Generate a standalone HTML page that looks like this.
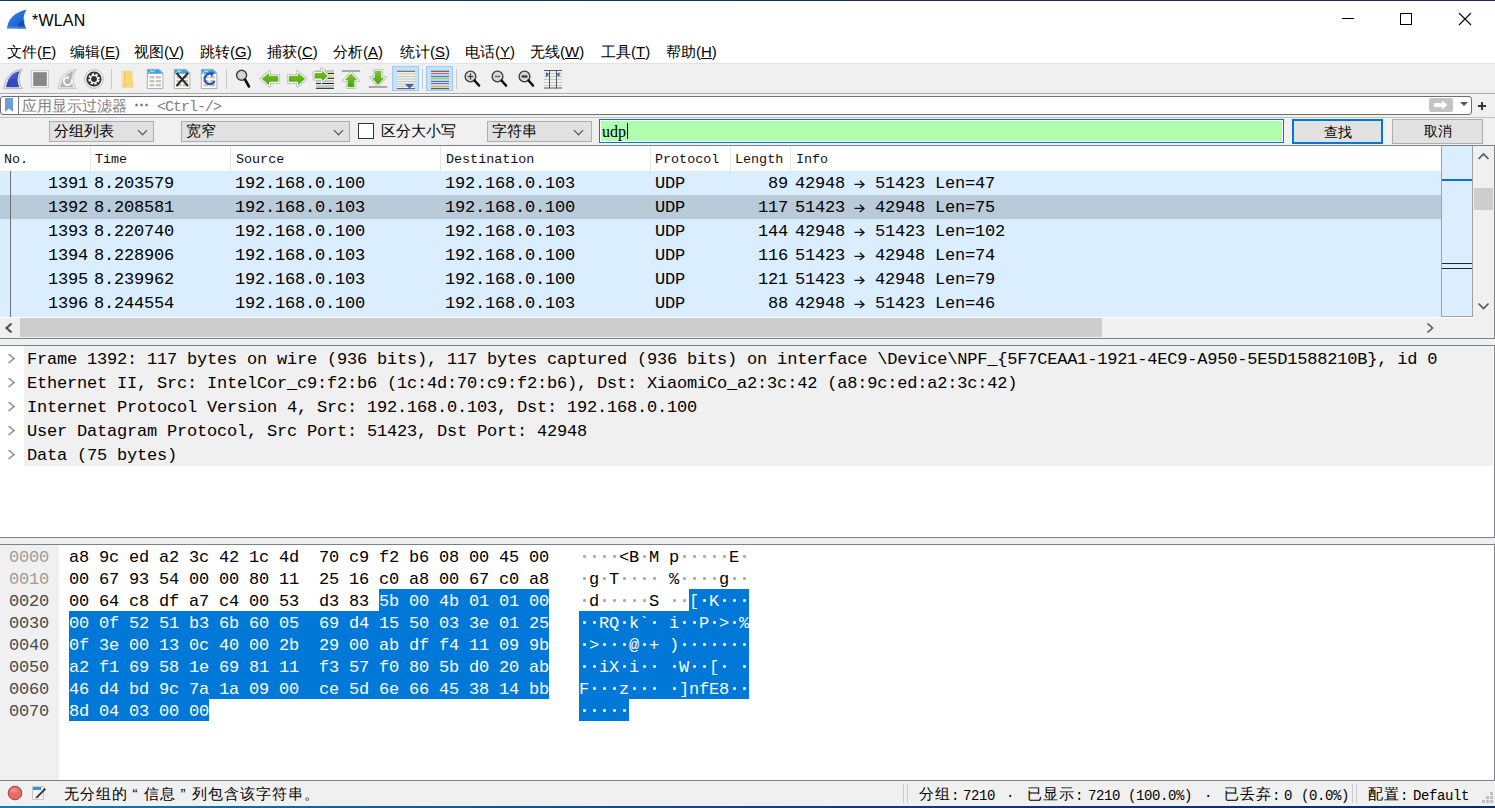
<!DOCTYPE html><html><head><meta charset="utf-8"><style>
*{margin:0;padding:0;box-sizing:border-box}
html,body{width:1495px;height:808px;overflow:hidden;background:#fff;font-family:"Liberation Sans",sans-serif;color:#000;position:relative}
.a{position:absolute}
.mi{position:absolute;top:5px;font-size:15px;white-space:nowrap;letter-spacing:0}
.m{font-family:"Liberation Mono",monospace;white-space:pre}
.pr{font-size:17px;letter-spacing:-0.2px;line-height:24px;height:24px}
.hx{font-size:17px;letter-spacing:-0.2px;line-height:22px;height:22px}
.combo{position:absolute;top:121px;height:21px;background:#e1e1e1;border:1px solid #adadad;font-size:15px;line-height:17px;padding-left:4px;white-space:nowrap}
.chev{position:absolute;width:7px;height:7px;border-right:1.2px solid #444;border-bottom:1.2px solid #444;transform:rotate(45deg)}
.btn{position:absolute;top:119px;height:25px;background:#e1e1e1;font-size:14px;line-height:22px;text-align:center}
</style></head><body>
<div class="a" style="left:0;top:0;width:1495px;height:1px;background:linear-gradient(90deg,#0c3a5a,#1a2a58)"></div>
<svg class="a" style="left:0;top:0" width="40" height="38">
<defs><linearGradient id="fin" x1="0" y1="0" x2="1" y2="1"><stop offset="0" stop-color="#3a8af0"/><stop offset="1" stop-color="#0e52c0"/></linearGradient></defs>
<path d="M7 28.5 C8 21 12 13 26.5 9.5 C23 15 22.5 22 26 28.5 Z" fill="url(#fin)"/>
<path d="M17 28.5 C18 24 21 21 24.5 19 C24 22 24.5 26 26 28.5 Z" fill="#0a3a98" opacity="0.6"/><rect x="7.5" y="26.5" width="18.5" height="2" fill="#6aa0e0" opacity="0.6"/>
</svg>
<div class="a" style="left:32px;top:12px;font-size:16px;letter-spacing:0.2px">*WLAN</div>
<div class="a" style="left:1342px;top:18px;width:12px;height:1px;background:#000"></div>
<div class="a" style="left:1400px;top:13px;width:12px;height:12px;border:1px solid #000"></div>
<svg class="a" style="left:1458px;top:12px" width="14" height="14"><path d="M1 1 L13 13 M13 1 L1 13" stroke="#000" stroke-width="1.1"/></svg>
<span class="a mi" style="left:7px;top:43px">文件(<u>F</u>)</span>
<span class="a mi" style="left:70px;top:43px">编辑(<u>E</u>)</span>
<span class="a mi" style="left:134px;top:43px">视图(<u>V</u>)</span>
<span class="a mi" style="left:200px;top:43px">跳转(<u>G</u>)</span>
<span class="a mi" style="left:267px;top:43px">捕获(<u>C</u>)</span>
<span class="a mi" style="left:333px;top:43px">分析(<u>A</u>)</span>
<span class="a mi" style="left:400px;top:43px">统计(<u>S</u>)</span>
<span class="a mi" style="left:465px;top:43px">电话(<u>Y</u>)</span>
<span class="a mi" style="left:530px;top:43px">无线(<u>W</u>)</span>
<span class="a mi" style="left:601px;top:43px">工具(<u>T</u>)</span>
<span class="a mi" style="left:666px;top:43px">帮助(<u>H</u>)</span>
<div class="a" style="left:0;top:63px;width:1495px;height:31px;background:#f0f0f0;border-top:1px solid #e3e3e3;border-bottom:1px solid #a8a8a8"></div>
<svg class="a" style="left:0;top:0" width="600" height="95" viewBox="0 0 600 95">
<defs>
<linearGradient id="gr" x1="0" y1="0" x2="0" y2="1"><stop offset="0" stop-color="#7cc832"/><stop offset="1" stop-color="#4aa00a"/></linearGradient>
</defs>
<!-- shark fin blue -->
<path d="M3.8 88.6 C4.5 79 10.5 70.5 22.2 69.2 C18.5 75 18 82 22.2 88.6 Z" fill="#e8e8e8" stroke="#a8a8a8" stroke-width="0.8"/>
<path d="M6 87.2 C7 80 12 73 20 71 C17 76 16.8 82 19.5 87.2 Z" fill="#3048c8"/>
<path d="M8 80 C10 75 14 72 19 71.5 C17 74 16.5 76 16.5 78 Z" fill="#4a62d8" opacity="0.6"/>
<!-- grey stop square -->
<rect x="31.3" y="70.3" width="17.2" height="17.4" fill="#f6f6f6" stroke="#c4c4c4" stroke-width="0.8"/>
<rect x="33.2" y="72.2" width="13.6" height="13.8" fill="#888"/>
<!-- grey fin reload -->
<path d="M58 88.6 C58.7 79 64.7 70.5 76.2 69.2 C72.5 75 72 82 76.2 88.6 Z" fill="#ececec" stroke="#c0c0c0" stroke-width="0.8"/>
<path d="M60.2 87.2 C61.2 80 66.2 73 74 71 C71 76 70.8 82 73.5 87.2 Z" fill="#b4b4b4"/>
<path d="M66 77.5 A4 4 0 1 0 71.5 79.5" fill="none" stroke="#fff" stroke-width="1.8"/>
<path d="M67.5 75 l-1.5 4 l3.2 -0.8z" fill="#fff"/>
<!-- gear -->
<circle cx="94" cy="79" r="9.4" fill="#efefef" stroke="#b0b0b0" stroke-width="0.8"/>
<circle cx="94" cy="79" r="7.6" fill="#333"/>
<circle cx="94" cy="79" r="4.9" fill="none" stroke="#fff" stroke-width="1.7" stroke-dasharray="2.2 1.65" transform="rotate(12 94 79)"/>
<circle cx="94" cy="79" r="3.6" fill="none" stroke="#fff" stroke-width="1.4"/>
<circle cx="94" cy="79" r="2.3" fill="#333"/>
<line x1="111.5" y1="69" x2="111.5" y2="89" stroke="#c8c8c8"/>
<!-- folder -->
<path d="M121 70.8 h11.5 v11 l1 1 v5 h-10 l-1.5 0.8 Z" fill="#f6d67a"/>
<path d="M121 70.8 l2.5 1.2 v15.5 l-1.2 1.2 l-1.3 -1.5 Z" fill="#fbe6a8"/>
<path d="M123.5 72 h2 v15.5 h-2 Z" fill="#eec45a" opacity="0.6"/>
<!-- doc -->
<g id="doc">
<path d="M147.3 69.4 h12 l3.6 3.6 v15.6 h-15.6 Z" fill="#fefef6" stroke="#9a9a9a" stroke-width="0.8"/>
<path d="M147.7 69.8 h11.4 l3.4 3.4 v0.5 h-14.8 Z" fill="#3aa0e8"/>
<path d="M149 73 l2.5 -2.5 l1 1.5 l2 -1.5" fill="none" stroke="#fff" stroke-width="0.9"/>
<g fill="#c4c4c4"><rect x="149.5" y="76" width="5" height="2.4"/><rect x="156" y="76" width="5" height="2.4"/><rect x="149.5" y="80" width="5" height="2.4"/><rect x="156" y="80" width="5" height="2.4"/><rect x="149.5" y="84" width="5" height="2.4"/><rect x="156" y="84" width="5" height="2.4"/></g>
</g>
<use href="#doc" x="27"/>
<path d="M176.5 73 L188 86 M188 73 L176.5 86" stroke="#2a2a2a" stroke-width="2"/>
<use href="#doc" x="54"/>
<path d="M212.5 74.5 A5.2 5.2 0 1 0 214.5 81" fill="none" stroke="#2a58b0" stroke-width="2.2"/>
<path d="M209.5 72 l5 0.5 l-2.8 4.5z" fill="#2a58b0"/>
<line x1="226.5" y1="69" x2="226.5" y2="89" stroke="#c8c8c8"/>
<!-- magnifier -->
<circle cx="241.6" cy="75.2" r="5" fill="#d6d6d6" stroke="#3a3a3a" stroke-width="1.4"/>
<line x1="245" y1="79.5" x2="249" y2="86.5" stroke="#111" stroke-width="2.6" stroke-linecap="round"/>
<!-- left arrow -->
<path d="M261 78.8 l8.6 -7.4 v3.8 h9.2 v7.2 h-9.2 v3.8 Z" fill="none" stroke="#b4b4b4" stroke-width="2.6" stroke-linejoin="round"/><path d="M261 78.8 l8.6 -7.4 v3.8 h9.2 v7.2 h-9.2 v3.8 Z" fill="url(#gr)" stroke="#fbfbfb" stroke-width="1.1" stroke-linejoin="round"/>
<!-- right arrow -->
<path d="M306 78.8 l-8.6 -7.4 v3.8 h-9.2 v7.2 h9.2 v3.8 Z" fill="none" stroke="#b4b4b4" stroke-width="2.6" stroke-linejoin="round"/><path d="M306 78.8 l-8.6 -7.4 v3.8 h-9.2 v7.2 h9.2 v3.8 Z" fill="url(#gr)" stroke="#fbfbfb" stroke-width="1.1" stroke-linejoin="round"/>
<!-- goto packet -->
<g stroke-width="1.1">
<line x1="316" y1="71" x2="334" y2="71" stroke="#a0a8a8"/><line x1="316" y1="73.4" x2="334" y2="73.4" stroke="#222"/>
<line x1="329" y1="75.8" x2="334" y2="75.8" stroke="#f8e040" stroke-width="1.8"/><line x1="316" y1="78.3" x2="334" y2="78.3" stroke="#222"/>
<line x1="316" y1="81" x2="334" y2="81" stroke="#a0a8a8"/><line x1="316" y1="83.5" x2="334" y2="83.5" stroke="#222"/>
<line x1="316" y1="86" x2="334" y2="86" stroke="#a0a8a8"/><line x1="316" y1="88.3" x2="334" y2="88.3" stroke="#222"/>
</g>
<path d="M314 72.5 h7.5 v-3.5 l7 6.8 l-7 6.8 v-3.5 h-7.5 Z" fill="none" stroke="#b4b4b4" stroke-width="2.6" stroke-linejoin="round"/><path d="M314 72.5 h7.5 v-3.5 l7 6.8 l-7 6.8 v-3.5 h-7.5 Z" fill="url(#gr)" stroke="#fbfbfb" stroke-width="1.1" stroke-linejoin="round"/>
<!-- first -->
<line x1="342.5" y1="71" x2="359.5" y2="71" stroke="#a8a8a8" stroke-width="1.8" stroke-linecap="round"/>
<path d="M351 72.5 l-7.5 8.3 h3.6 v7 h7.8 v-7 h3.6 Z" fill="none" stroke="#b4b4b4" stroke-width="2.6" stroke-linejoin="round"/><path d="M351 72.5 l-7.5 8.3 h3.6 v7 h7.8 v-7 h3.6 Z" fill="url(#gr)" stroke="#fbfbfb" stroke-width="1.1" stroke-linejoin="round"/>
<!-- last -->
<line x1="369.5" y1="87" x2="386.5" y2="87" stroke="#a8a8a8" stroke-width="1.8" stroke-linecap="round"/>
<path d="M378 85.5 l-7.5 -8.3 h3.6 v-7 h7.8 v7 h3.6 Z" fill="none" stroke="#b4b4b4" stroke-width="2.6" stroke-linejoin="round"/><path d="M378 85.5 l-7.5 -8.3 h3.6 v-7 h7.8 v7 h3.6 Z" fill="url(#gr)" stroke="#fbfbfb" stroke-width="1.1" stroke-linejoin="round"/>
<!-- autoscroll (pressed) -->
<rect x="392.5" y="66.5" width="26" height="24" fill="#c8e0f4" stroke="#99ccf6"/>
<rect x="397" y="71" width="18" height="18" fill="#f2f2ee"/>
<g stroke-width="1"><line x1="397" y1="71.3" x2="415" y2="71.3" stroke="#555"/><line x1="397" y1="88.6" x2="415" y2="88.6" stroke="#555"/>
<line x1="397" y1="73.8" x2="415" y2="73.8" stroke="#c4c4bc"/><line x1="397" y1="76.5" x2="415" y2="76.5" stroke="#c4c4bc"/><line x1="397" y1="79" x2="415" y2="79" stroke="#c4c4bc"/><line x1="397" y1="81.6" x2="415" y2="81.6" stroke="#c4c4bc"/><line x1="397" y1="84" x2="415" y2="84" stroke="#c4c4bc"/><line x1="397" y1="86.4" x2="415" y2="86.4" stroke="#c4c4bc"/></g>

<path d="M405 84 h9 l-4.5 4.5 Z" fill="#2d62b8"/>
<line x1="422.5" y1="69" x2="422.5" y2="89" stroke="#c8c8c8"/>
<!-- colorize (pressed) -->
<rect x="426.5" y="66.5" width="26" height="24" fill="#c8e0f4" stroke="#99ccf6"/>
<g stroke-width="1.1"><line x1="431" y1="71.3" x2="449" y2="71.3" stroke="#555"/><line x1="431" y1="73.6" x2="449" y2="73.6" stroke="#e85050"/><line x1="431" y1="76.5" x2="449" y2="76.5" stroke="#4a78c0"/><line x1="431" y1="78.6" x2="449" y2="78.6" stroke="#80d040"/><line x1="431" y1="81.4" x2="449" y2="81.4" stroke="#4a70b8"/><line x1="431" y1="83.5" x2="449" y2="83.5" stroke="#8a6a98"/><line x1="431" y1="86.4" x2="449" y2="86.4" stroke="#e0b040"/><line x1="431" y1="88.6" x2="449" y2="88.6" stroke="#555"/></g>
<line x1="456.5" y1="69" x2="456.5" y2="89" stroke="#c8c8c8"/>
<!-- zoom in/out/normal -->
<g id="zm"><circle cx="470.5" cy="76.5" r="5.4" fill="#d8d8d8" stroke="#3a3a3a" stroke-width="1.3"/><line x1="474.5" y1="80.5" x2="479" y2="85.5" stroke="#111" stroke-width="2.6" stroke-linecap="round"/></g>
<path d="M467.6 76.5 h5.8 M470.5 73.6 v5.8" stroke="#333" stroke-width="1.2"/>
<use href="#zm" x="27"/>
<path d="M494.8 76.5 h5.4" stroke="#666" stroke-width="1.4"/>
<use href="#zm" x="54"/>
<path d="M521.6 76.5 h5.8" stroke="#333" stroke-width="2.2"/>
<!-- resize columns -->
<g stroke="#c8c8c8" stroke-width="1"><line x1="544" y1="73.5" x2="562" y2="73.5"/><line x1="544" y1="76.5" x2="562" y2="76.5"/><line x1="544" y1="79.5" x2="562" y2="79.5"/><line x1="544" y1="82.5" x2="562" y2="82.5"/><line x1="544" y1="85.5" x2="562" y2="85.5"/></g>
<g stroke="#555" stroke-width="1"><line x1="544" y1="70.5" x2="562" y2="70.5"/><line x1="544" y1="88" x2="562" y2="88"/><line x1="549.5" y1="70" x2="549.5" y2="88.5"/><line x1="556.5" y1="70" x2="556.5" y2="88.5"/></g>
<path d="M546 72 l3 2.5 l-3 2.5z M559.5 72 l-3 2.5 l3 2.5z" fill="#2d5fb8"/>
</svg>

<div class="a" style="left:0;top:94px;width:1495px;height:24px;background:#f0f0f0"></div>
<div class="a" style="left:0;top:94px;width:1495px;height:1px;background:#fafafa"></div>
<div class="a" style="left:0;top:117px;width:1495px;height:1px;background:#c0c0c0"></div>
<div class="a" style="left:0;top:96px;width:1472px;height:19px;background:#fff;border:1px solid #6e6e6e;border-radius:3px"></div>
<div class="a" style="left:18px;top:97px;width:1px;height:17px;background:#7a7a7a"></div>
<svg class="a" style="left:5px;top:98px" width="9" height="15"><path d="M0 0 H8 V14 L4 10.5 L0 14 Z" fill="#6a9fd8"/></svg>
<div class="a" style="left:22px;top:97px;font-size:15px;line-height:17px;white-space:nowrap;color:#808080;"><span style="display:inline-block;width:15px;text-align:center;">应</span><span style="display:inline-block;width:15px;text-align:center;">用</span><span style="display:inline-block;width:15px;text-align:center;">显</span><span style="display:inline-block;width:15px;text-align:center;">示</span><span style="display:inline-block;width:15px;text-align:center;">过</span><span style="display:inline-block;width:15px;text-align:center;">滤</span><span style="display:inline-block;width:15px;text-align:center;">器</span></div>
<div class="a" style="left:134px;top:95px;font-size:15px;line-height:17px;white-space:nowrap;color:#707070;font-weight:bold"><span style="display:inline-block;width:15px;text-align:center;">⋯</span></div>
<div class="a" style="left:157px;top:97px;font-size:15px;line-height:17px;white-space:nowrap;color:#808080;"><span style="display:inline-block;width:8px;text-align:center;font-family:'Liberation Mono',monospace;font-size:15px;position:relative;top:0px">&lt;</span><span style="display:inline-block;width:8px;text-align:center;font-family:'Liberation Mono',monospace;font-size:15px;position:relative;top:0px">C</span><span style="display:inline-block;width:8px;text-align:center;font-family:'Liberation Mono',monospace;font-size:15px;position:relative;top:0px">t</span><span style="display:inline-block;width:8px;text-align:center;font-family:'Liberation Mono',monospace;font-size:15px;position:relative;top:0px">r</span><span style="display:inline-block;width:8px;text-align:center;font-family:'Liberation Mono',monospace;font-size:15px;position:relative;top:0px">l</span><span style="display:inline-block;width:8px;text-align:center;font-family:'Liberation Mono',monospace;font-size:15px;position:relative;top:0px">-</span><span style="display:inline-block;width:8px;text-align:center;font-family:'Liberation Mono',monospace;font-size:15px;position:relative;top:0px">/</span><span style="display:inline-block;width:8px;text-align:center;font-family:'Liberation Mono',monospace;font-size:15px;position:relative;top:0px">&gt;</span></div>
<div class="a" style="left:1429px;top:98px;width:24px;height:14px;background:#c4c4c4;border-radius:2px"></div>
<svg class="a" style="left:1433px;top:100px" width="16" height="10"><path d="M1 3 H9 V0.5 L14.5 5 L9 9.5 V7 H1 Z" fill="#fff"/></svg>
<svg class="a" style="left:1460px;top:102px" width="9" height="5"><path d="M0 0 H8 L4 4 Z" fill="#555"/></svg>
<svg class="a" style="left:1477px;top:101px" width="10" height="10"><path d="M5 1 V9 M1 5 H9" stroke="#333" stroke-width="2"/></svg>
<div class="a" style="left:0;top:118px;width:1495px;height:27px;background:#f0f0f0"></div>
<div class="combo" style="left:49px;width:105px">分组列表</div><div class="chev" style="left:139px;top:127px"></div>
<div class="combo" style="left:181px;width:169px">宽窄</div><div class="chev" style="left:335px;top:127px"></div>
<div class="a" style="left:358px;top:123px;width:16px;height:16px;border:1px solid #333;background:#fff"></div>
<div class="a" style="left:381px;top:122px;font-size:15px;line-height:17px;white-space:nowrap">区分大小写</div>
<div class="combo" style="left:487px;width:105px">字符串</div><div class="chev" style="left:575px;top:127px"></div>
<div class="a" style="left:599px;top:119px;width:685px;height:24px;background:#afffaf;border:1px solid #0078d7;box-shadow:inset 0 0 0 1px #fff"></div>
<div class="a" style="left:602px;top:122px;font-family:'Liberation Serif',serif;font-size:16px;line-height:20px">udp</div>
<div class="a" style="left:627px;top:123px;width:1px;height:16px;background:#000"></div>
<div class="btn" style="left:1292px;width:91px;border:2px solid #0078d7">查找</div>
<div class="btn" style="left:1392px;width:91px;border:1px solid #adadad;line-height:23px">取消</div>
<div class="a" style="left:0;top:145px;width:1495px;height:194px;background:#fff;border-top:1px solid #7a828a;border-bottom:1px solid #7a828a;border-right:1px solid #7a828a"></div>
<div class="a" style="left:90px;top:146px;width:1px;height:25px;background:#e5e5e5"></div>
<div class="a" style="left:230px;top:146px;width:1px;height:25px;background:#e5e5e5"></div>
<div class="a" style="left:440px;top:146px;width:1px;height:25px;background:#e5e5e5"></div>
<div class="a" style="left:650px;top:146px;width:1px;height:25px;background:#e5e5e5"></div>
<div class="a" style="left:730px;top:146px;width:1px;height:25px;background:#e5e5e5"></div>
<div class="a" style="left:790px;top:146px;width:1px;height:25px;background:#e5e5e5"></div>
<div class="a m" style="left:4px;top:148px;font-size:13.4px;line-height:24px;color:#111">No.</div>
<div class="a m" style="left:95px;top:148px;font-size:13.4px;line-height:24px;color:#111">Time</div>
<div class="a m" style="left:236px;top:148px;font-size:13.4px;line-height:24px;color:#111">Source</div>
<div class="a m" style="left:446px;top:148px;font-size:13.4px;line-height:24px;color:#111">Destination</div>
<div class="a m" style="left:655px;top:148px;font-size:13.4px;line-height:24px;color:#111">Protocol</div>
<div class="a m" style="left:735px;top:148px;font-size:13.4px;line-height:24px;color:#111">Length</div>
<div class="a m" style="left:796px;top:148px;font-size:13.4px;line-height:24px;color:#111">Info</div>
<div class="a" style="left:0;top:171px;width:1441px;height:146px;background:#daeeff"></div>
<div class="a" style="left:0;top:195px;width:1441px;height:24px;background:#b9cad9"></div>
<div class="a" style="left:10px;top:171px;width:1px;height:146px;background:#6a7078"></div>
<div class="a m pr" style="left:48px;top:172px">1391</div>
<div class="a m pr" style="left:94px;top:172px">8.203579</div>
<div class="a m pr" style="left:235px;top:172px">192.168.0.100</div>
<div class="a m pr" style="left:445px;top:172px">192.168.0.103</div>
<div class="a m pr" style="left:655px;top:172px">UDP</div>
<div class="a m pr" style="left:768px;top:172px">89</div>
<div class="a m pr" style="left:795px;top:172px">42948</div>
<div class="a m pr" style="left:875px;top:172px">51423 Len=47</div>
<svg class="a" style="left:853px;top:179px" width="13" height="10"><path d="M1.5 5.4 H11 M6.8 1.8 L11 5.4 L6.8 9" fill="none" stroke="#111" stroke-width="1.3"/></svg>
<div class="a m pr" style="left:48px;top:196px">1392</div>
<div class="a m pr" style="left:94px;top:196px">8.208581</div>
<div class="a m pr" style="left:235px;top:196px">192.168.0.103</div>
<div class="a m pr" style="left:445px;top:196px">192.168.0.100</div>
<div class="a m pr" style="left:655px;top:196px">UDP</div>
<div class="a m pr" style="left:758px;top:196px">117</div>
<div class="a m pr" style="left:795px;top:196px">51423</div>
<div class="a m pr" style="left:875px;top:196px">42948 Len=75</div>
<svg class="a" style="left:853px;top:203px" width="13" height="10"><path d="M1.5 5.4 H11 M6.8 1.8 L11 5.4 L6.8 9" fill="none" stroke="#111" stroke-width="1.3"/></svg>
<div class="a m pr" style="left:48px;top:220px">1393</div>
<div class="a m pr" style="left:94px;top:220px">8.220740</div>
<div class="a m pr" style="left:235px;top:220px">192.168.0.100</div>
<div class="a m pr" style="left:445px;top:220px">192.168.0.103</div>
<div class="a m pr" style="left:655px;top:220px">UDP</div>
<div class="a m pr" style="left:758px;top:220px">144</div>
<div class="a m pr" style="left:795px;top:220px">42948</div>
<div class="a m pr" style="left:875px;top:220px">51423 Len=102</div>
<svg class="a" style="left:853px;top:227px" width="13" height="10"><path d="M1.5 5.4 H11 M6.8 1.8 L11 5.4 L6.8 9" fill="none" stroke="#111" stroke-width="1.3"/></svg>
<div class="a m pr" style="left:48px;top:244px">1394</div>
<div class="a m pr" style="left:94px;top:244px">8.228906</div>
<div class="a m pr" style="left:235px;top:244px">192.168.0.103</div>
<div class="a m pr" style="left:445px;top:244px">192.168.0.100</div>
<div class="a m pr" style="left:655px;top:244px">UDP</div>
<div class="a m pr" style="left:758px;top:244px">116</div>
<div class="a m pr" style="left:795px;top:244px">51423</div>
<div class="a m pr" style="left:875px;top:244px">42948 Len=74</div>
<svg class="a" style="left:853px;top:251px" width="13" height="10"><path d="M1.5 5.4 H11 M6.8 1.8 L11 5.4 L6.8 9" fill="none" stroke="#111" stroke-width="1.3"/></svg>
<div class="a m pr" style="left:48px;top:268px">1395</div>
<div class="a m pr" style="left:94px;top:268px">8.239962</div>
<div class="a m pr" style="left:235px;top:268px">192.168.0.103</div>
<div class="a m pr" style="left:445px;top:268px">192.168.0.100</div>
<div class="a m pr" style="left:655px;top:268px">UDP</div>
<div class="a m pr" style="left:758px;top:268px">121</div>
<div class="a m pr" style="left:795px;top:268px">51423</div>
<div class="a m pr" style="left:875px;top:268px">42948 Len=79</div>
<svg class="a" style="left:853px;top:275px" width="13" height="10"><path d="M1.5 5.4 H11 M6.8 1.8 L11 5.4 L6.8 9" fill="none" stroke="#111" stroke-width="1.3"/></svg>
<div class="a m pr" style="left:48px;top:292px">1396</div>
<div class="a m pr" style="left:94px;top:292px">8.244554</div>
<div class="a m pr" style="left:235px;top:292px">192.168.0.100</div>
<div class="a m pr" style="left:445px;top:292px">192.168.0.103</div>
<div class="a m pr" style="left:655px;top:292px">UDP</div>
<div class="a m pr" style="left:768px;top:292px">88</div>
<div class="a m pr" style="left:795px;top:292px">42948</div>
<div class="a m pr" style="left:875px;top:292px">51423 Len=46</div>
<svg class="a" style="left:853px;top:299px" width="13" height="10"><path d="M1.5 5.4 H11 M6.8 1.8 L11 5.4 L6.8 9" fill="none" stroke="#111" stroke-width="1.3"/></svg>
<div class="a" style="left:1441px;top:146px;width:32px;height:171px;background:#daeeff;border:1px solid #a0a0a0;border-top:none"></div>
<div class="a" style="left:1442px;top:179px;width:30px;height:2px;background:#0a6ed8"></div>
<div class="a" style="left:1442px;top:263px;width:30px;height:1px;background:#1a2a30"></div>
<div class="a" style="left:1442px;top:268px;width:30px;height:1px;background:#1a2a30"></div>
<div class="a" style="left:1473px;top:146px;width:21px;height:192px;background:#f0f0f0"></div>
<div class="a" style="left:1474px;top:188px;width:19px;height:22px;background:#cdcdcd"></div>
<svg class="a" style="left:1477px;top:152px" width="13" height="9"><path d="M1.5 7 L6.5 2 L11.5 7" fill="none" stroke="#555" stroke-width="1.6"/></svg>
<svg class="a" style="left:1477px;top:302px" width="13" height="9"><path d="M1.5 1.5 L6.5 6.5 L11.5 1.5" fill="none" stroke="#555" stroke-width="1.6"/></svg>
<div class="a" style="left:0;top:317px;width:1441px;height:1px;background:#fff"></div>
<div class="a" style="left:0;top:318px;width:1473px;height:20px;background:#f0f0f0"></div>
<div class="a" style="left:20px;top:318px;width:1082px;height:19px;background:#cdcdcd"></div>
<svg class="a" style="left:4px;top:322px" width="9" height="12"><path d="M7.5 1.5 L2.5 6 L7.5 10.5" fill="none" stroke="#505050" stroke-width="2.2"/></svg>
<svg class="a" style="left:1426px;top:322px" width="9" height="12"><path d="M1.5 1.5 L6.5 6 L1.5 10.5" fill="none" stroke="#555" stroke-width="1.6"/></svg>
<div class="a" style="left:0;top:339px;width:1495px;height:6px;background:#f0f0f0"></div>
<div class="a" style="left:0;top:345px;width:1495px;height:193px;background:#fff;border-top:1px solid #7a828a;border-bottom:1px solid #7a828a;border-right:1px solid #7a828a"></div>
<div class="a" style="left:24px;top:346px;width:1469px;height:120px;background:#f0f0f0"></div>
<svg class="a" style="left:7px;top:353px" width="9" height="11"><path d="M1.5 1 L7 5.5 L1.5 10" fill="none" stroke="#8a8a8a" stroke-width="1.5"/></svg>
<div class="a m pr" style="left:27px;top:348px">Frame 1392: 117 bytes on wire (936 bits), 117 bytes captured (936 bits) on interface \Device\NPF_{5F7CEAA1-1921-4EC9-A950-5E5D1588210B}, id 0</div>
<svg class="a" style="left:7px;top:377px" width="9" height="11"><path d="M1.5 1 L7 5.5 L1.5 10" fill="none" stroke="#8a8a8a" stroke-width="1.5"/></svg>
<div class="a m pr" style="left:27px;top:372px">Ethernet II, Src: IntelCor_c9:f2:b6 (1c:4d:70:c9:f2:b6), Dst: XiaomiCo_a2:3c:42 (a8:9c:ed:a2:3c:42)</div>
<svg class="a" style="left:7px;top:401px" width="9" height="11"><path d="M1.5 1 L7 5.5 L1.5 10" fill="none" stroke="#8a8a8a" stroke-width="1.5"/></svg>
<div class="a m pr" style="left:27px;top:396px">Internet Protocol Version 4, Src: 192.168.0.103, Dst: 192.168.0.100</div>
<svg class="a" style="left:7px;top:425px" width="9" height="11"><path d="M1.5 1 L7 5.5 L1.5 10" fill="none" stroke="#8a8a8a" stroke-width="1.5"/></svg>
<div class="a m pr" style="left:27px;top:420px">User Datagram Protocol, Src Port: 51423, Dst Port: 42948</div>
<svg class="a" style="left:7px;top:449px" width="9" height="11"><path d="M1.5 1 L7 5.5 L1.5 10" fill="none" stroke="#8a8a8a" stroke-width="1.5"/></svg>
<div class="a m pr" style="left:27px;top:444px">Data (75 bytes)</div>
<div class="a" style="left:0;top:538px;width:1495px;height:6px;background:#f0f0f0"></div>
<div class="a" style="left:0;top:544px;width:1495px;height:237px;background:#fff;border-top:1px solid #7a828a;border-bottom:1px solid #7a828a;border-right:1px solid #7a828a"></div>
<div class="a" style="left:0;top:545px;width:59px;height:235px;background:#f0f0f0"></div>
<div class="a m hx" style="left:9px;top:547px;color:#a09a98">0000</div>
<div class="a m hx" style="left:69px;top:547px;color:#000">a8</div>
<div class="a" style="left:583px;top:555px;width:2.6px;height:2.6px;border-radius:50%;background:#a8a8a8"></div>
<div class="a m hx" style="left:99px;top:547px;color:#000">9c</div>
<div class="a" style="left:593px;top:555px;width:2.6px;height:2.6px;border-radius:50%;background:#a8a8a8"></div>
<div class="a m hx" style="left:129px;top:547px;color:#000">ed</div>
<div class="a" style="left:603px;top:555px;width:2.6px;height:2.6px;border-radius:50%;background:#a8a8a8"></div>
<div class="a m hx" style="left:159px;top:547px;color:#000">a2</div>
<div class="a" style="left:613px;top:555px;width:2.6px;height:2.6px;border-radius:50%;background:#a8a8a8"></div>
<div class="a m hx" style="left:189px;top:547px;color:#000">3c</div>
<div class="a m hx" style="left:619px;top:547px;color:#000">&lt;</div>
<div class="a m hx" style="left:219px;top:547px;color:#000">42</div>
<div class="a m hx" style="left:629px;top:547px;color:#000">B</div>
<div class="a m hx" style="left:249px;top:547px;color:#000">1c</div>
<div class="a" style="left:643px;top:555px;width:2.6px;height:2.6px;border-radius:50%;background:#a8a8a8"></div>
<div class="a m hx" style="left:279px;top:547px;color:#000">4d</div>
<div class="a m hx" style="left:649px;top:547px;color:#000">M</div>
<div class="a m hx" style="left:319px;top:547px;color:#000">70</div>
<div class="a m hx" style="left:669px;top:547px;color:#000">p</div>
<div class="a m hx" style="left:349px;top:547px;color:#000">c9</div>
<div class="a" style="left:683px;top:555px;width:2.6px;height:2.6px;border-radius:50%;background:#a8a8a8"></div>
<div class="a m hx" style="left:379px;top:547px;color:#000">f2</div>
<div class="a" style="left:693px;top:555px;width:2.6px;height:2.6px;border-radius:50%;background:#a8a8a8"></div>
<div class="a m hx" style="left:409px;top:547px;color:#000">b6</div>
<div class="a" style="left:703px;top:555px;width:2.6px;height:2.6px;border-radius:50%;background:#a8a8a8"></div>
<div class="a m hx" style="left:439px;top:547px;color:#000">08</div>
<div class="a" style="left:713px;top:555px;width:2.6px;height:2.6px;border-radius:50%;background:#a8a8a8"></div>
<div class="a m hx" style="left:469px;top:547px;color:#000">00</div>
<div class="a" style="left:723px;top:555px;width:2.6px;height:2.6px;border-radius:50%;background:#a8a8a8"></div>
<div class="a m hx" style="left:499px;top:547px;color:#000">45</div>
<div class="a m hx" style="left:729px;top:547px;color:#000">E</div>
<div class="a m hx" style="left:529px;top:547px;color:#000">00</div>
<div class="a" style="left:743px;top:555px;width:2.6px;height:2.6px;border-radius:50%;background:#a8a8a8"></div>
<div class="a m hx" style="left:9px;top:569px;color:#a09a98">0010</div>
<div class="a m hx" style="left:69px;top:569px;color:#000">00</div>
<div class="a" style="left:583px;top:577px;width:2.6px;height:2.6px;border-radius:50%;background:#a8a8a8"></div>
<div class="a m hx" style="left:99px;top:569px;color:#000">67</div>
<div class="a m hx" style="left:589px;top:569px;color:#000">g</div>
<div class="a m hx" style="left:129px;top:569px;color:#000">93</div>
<div class="a" style="left:603px;top:577px;width:2.6px;height:2.6px;border-radius:50%;background:#a8a8a8"></div>
<div class="a m hx" style="left:159px;top:569px;color:#000">54</div>
<div class="a m hx" style="left:609px;top:569px;color:#000">T</div>
<div class="a m hx" style="left:189px;top:569px;color:#000">00</div>
<div class="a" style="left:623px;top:577px;width:2.6px;height:2.6px;border-radius:50%;background:#a8a8a8"></div>
<div class="a m hx" style="left:219px;top:569px;color:#000">00</div>
<div class="a" style="left:633px;top:577px;width:2.6px;height:2.6px;border-radius:50%;background:#a8a8a8"></div>
<div class="a m hx" style="left:249px;top:569px;color:#000">80</div>
<div class="a" style="left:643px;top:577px;width:2.6px;height:2.6px;border-radius:50%;background:#a8a8a8"></div>
<div class="a m hx" style="left:279px;top:569px;color:#000">11</div>
<div class="a" style="left:653px;top:577px;width:2.6px;height:2.6px;border-radius:50%;background:#a8a8a8"></div>
<div class="a m hx" style="left:319px;top:569px;color:#000">25</div>
<div class="a m hx" style="left:669px;top:569px;color:#000">%</div>
<div class="a m hx" style="left:349px;top:569px;color:#000">16</div>
<div class="a" style="left:683px;top:577px;width:2.6px;height:2.6px;border-radius:50%;background:#a8a8a8"></div>
<div class="a m hx" style="left:379px;top:569px;color:#000">c0</div>
<div class="a" style="left:693px;top:577px;width:2.6px;height:2.6px;border-radius:50%;background:#a8a8a8"></div>
<div class="a m hx" style="left:409px;top:569px;color:#000">a8</div>
<div class="a" style="left:703px;top:577px;width:2.6px;height:2.6px;border-radius:50%;background:#a8a8a8"></div>
<div class="a m hx" style="left:439px;top:569px;color:#000">00</div>
<div class="a" style="left:713px;top:577px;width:2.6px;height:2.6px;border-radius:50%;background:#a8a8a8"></div>
<div class="a m hx" style="left:469px;top:569px;color:#000">67</div>
<div class="a m hx" style="left:719px;top:569px;color:#000">g</div>
<div class="a m hx" style="left:499px;top:569px;color:#000">c0</div>
<div class="a" style="left:733px;top:577px;width:2.6px;height:2.6px;border-radius:50%;background:#a8a8a8"></div>
<div class="a m hx" style="left:529px;top:569px;color:#000">a8</div>
<div class="a" style="left:743px;top:577px;width:2.6px;height:2.6px;border-radius:50%;background:#a8a8a8"></div>
<div class="a m hx" style="left:9px;top:591px;color:#4a4a4a">0020</div>
<div class="a" style="left:379px;top:589px;width:170px;height:22px;background:#0078d7"></div>
<div class="a" style="left:689px;top:589px;width:60px;height:22px;background:#0078d7"></div>
<div class="a m hx" style="left:69px;top:591px;color:#000">00</div>
<div class="a" style="left:583px;top:599px;width:2.6px;height:2.6px;border-radius:50%;background:#a8a8a8"></div>
<div class="a m hx" style="left:99px;top:591px;color:#000">64</div>
<div class="a m hx" style="left:589px;top:591px;color:#000">d</div>
<div class="a m hx" style="left:129px;top:591px;color:#000">c8</div>
<div class="a" style="left:603px;top:599px;width:2.6px;height:2.6px;border-radius:50%;background:#a8a8a8"></div>
<div class="a m hx" style="left:159px;top:591px;color:#000">df</div>
<div class="a" style="left:613px;top:599px;width:2.6px;height:2.6px;border-radius:50%;background:#a8a8a8"></div>
<div class="a m hx" style="left:189px;top:591px;color:#000">a7</div>
<div class="a" style="left:623px;top:599px;width:2.6px;height:2.6px;border-radius:50%;background:#a8a8a8"></div>
<div class="a m hx" style="left:219px;top:591px;color:#000">c4</div>
<div class="a" style="left:633px;top:599px;width:2.6px;height:2.6px;border-radius:50%;background:#a8a8a8"></div>
<div class="a m hx" style="left:249px;top:591px;color:#000">00</div>
<div class="a" style="left:643px;top:599px;width:2.6px;height:2.6px;border-radius:50%;background:#a8a8a8"></div>
<div class="a m hx" style="left:279px;top:591px;color:#000">53</div>
<div class="a m hx" style="left:649px;top:591px;color:#000">S</div>
<div class="a m hx" style="left:319px;top:591px;color:#000">d3</div>
<div class="a" style="left:673px;top:599px;width:2.6px;height:2.6px;border-radius:50%;background:#a8a8a8"></div>
<div class="a m hx" style="left:349px;top:591px;color:#000">83</div>
<div class="a" style="left:683px;top:599px;width:2.6px;height:2.6px;border-radius:50%;background:#a8a8a8"></div>
<div class="a m hx" style="left:379px;top:591px;color:#fff">5b</div>
<div class="a m hx" style="left:689px;top:591px;color:#fff">[</div>
<div class="a m hx" style="left:409px;top:591px;color:#fff">00</div>
<div class="a" style="left:703px;top:599px;width:2.6px;height:2.6px;border-radius:50%;background:#e8f2fb"></div>
<div class="a m hx" style="left:439px;top:591px;color:#fff">4b</div>
<div class="a m hx" style="left:709px;top:591px;color:#fff">K</div>
<div class="a m hx" style="left:469px;top:591px;color:#fff">01</div>
<div class="a" style="left:723px;top:599px;width:2.6px;height:2.6px;border-radius:50%;background:#e8f2fb"></div>
<div class="a m hx" style="left:499px;top:591px;color:#fff">01</div>
<div class="a" style="left:733px;top:599px;width:2.6px;height:2.6px;border-radius:50%;background:#e8f2fb"></div>
<div class="a m hx" style="left:529px;top:591px;color:#fff">00</div>
<div class="a" style="left:743px;top:599px;width:2.6px;height:2.6px;border-radius:50%;background:#e8f2fb"></div>
<div class="a m hx" style="left:9px;top:613px;color:#4a4a4a">0030</div>
<div class="a" style="left:69px;top:611px;width:480px;height:22px;background:#0078d7"></div>
<div class="a" style="left:579px;top:611px;width:170px;height:22px;background:#0078d7"></div>
<div class="a m hx" style="left:69px;top:613px;color:#fff">00</div>
<div class="a" style="left:583px;top:621px;width:2.6px;height:2.6px;border-radius:50%;background:#e8f2fb"></div>
<div class="a m hx" style="left:99px;top:613px;color:#fff">0f</div>
<div class="a" style="left:593px;top:621px;width:2.6px;height:2.6px;border-radius:50%;background:#e8f2fb"></div>
<div class="a m hx" style="left:129px;top:613px;color:#fff">52</div>
<div class="a m hx" style="left:599px;top:613px;color:#fff">R</div>
<div class="a m hx" style="left:159px;top:613px;color:#fff">51</div>
<div class="a m hx" style="left:609px;top:613px;color:#fff">Q</div>
<div class="a m hx" style="left:189px;top:613px;color:#fff">b3</div>
<div class="a" style="left:623px;top:621px;width:2.6px;height:2.6px;border-radius:50%;background:#e8f2fb"></div>
<div class="a m hx" style="left:219px;top:613px;color:#fff">6b</div>
<div class="a m hx" style="left:629px;top:613px;color:#fff">k</div>
<div class="a m hx" style="left:249px;top:613px;color:#fff">60</div>
<div class="a m hx" style="left:639px;top:613px;color:#fff">`</div>
<div class="a m hx" style="left:279px;top:613px;color:#fff">05</div>
<div class="a" style="left:653px;top:621px;width:2.6px;height:2.6px;border-radius:50%;background:#e8f2fb"></div>
<div class="a m hx" style="left:319px;top:613px;color:#fff">69</div>
<div class="a m hx" style="left:669px;top:613px;color:#fff">i</div>
<div class="a m hx" style="left:349px;top:613px;color:#fff">d4</div>
<div class="a" style="left:683px;top:621px;width:2.6px;height:2.6px;border-radius:50%;background:#e8f2fb"></div>
<div class="a m hx" style="left:379px;top:613px;color:#fff">15</div>
<div class="a" style="left:693px;top:621px;width:2.6px;height:2.6px;border-radius:50%;background:#e8f2fb"></div>
<div class="a m hx" style="left:409px;top:613px;color:#fff">50</div>
<div class="a m hx" style="left:699px;top:613px;color:#fff">P</div>
<div class="a m hx" style="left:439px;top:613px;color:#fff">03</div>
<div class="a" style="left:713px;top:621px;width:2.6px;height:2.6px;border-radius:50%;background:#e8f2fb"></div>
<div class="a m hx" style="left:469px;top:613px;color:#fff">3e</div>
<div class="a m hx" style="left:719px;top:613px;color:#fff">&gt;</div>
<div class="a m hx" style="left:499px;top:613px;color:#fff">01</div>
<div class="a" style="left:733px;top:621px;width:2.6px;height:2.6px;border-radius:50%;background:#e8f2fb"></div>
<div class="a m hx" style="left:529px;top:613px;color:#fff">25</div>
<div class="a m hx" style="left:739px;top:613px;color:#fff">%</div>
<div class="a m hx" style="left:9px;top:635px;color:#4a4a4a">0040</div>
<div class="a" style="left:69px;top:633px;width:480px;height:22px;background:#0078d7"></div>
<div class="a" style="left:579px;top:633px;width:170px;height:22px;background:#0078d7"></div>
<div class="a m hx" style="left:69px;top:635px;color:#fff">0f</div>
<div class="a" style="left:583px;top:643px;width:2.6px;height:2.6px;border-radius:50%;background:#e8f2fb"></div>
<div class="a m hx" style="left:99px;top:635px;color:#fff">3e</div>
<div class="a m hx" style="left:589px;top:635px;color:#fff">&gt;</div>
<div class="a m hx" style="left:129px;top:635px;color:#fff">00</div>
<div class="a" style="left:603px;top:643px;width:2.6px;height:2.6px;border-radius:50%;background:#e8f2fb"></div>
<div class="a m hx" style="left:159px;top:635px;color:#fff">13</div>
<div class="a" style="left:613px;top:643px;width:2.6px;height:2.6px;border-radius:50%;background:#e8f2fb"></div>
<div class="a m hx" style="left:189px;top:635px;color:#fff">0c</div>
<div class="a" style="left:623px;top:643px;width:2.6px;height:2.6px;border-radius:50%;background:#e8f2fb"></div>
<div class="a m hx" style="left:219px;top:635px;color:#fff">40</div>
<div class="a m hx" style="left:629px;top:635px;color:#fff">@</div>
<div class="a m hx" style="left:249px;top:635px;color:#fff">00</div>
<div class="a" style="left:643px;top:643px;width:2.6px;height:2.6px;border-radius:50%;background:#e8f2fb"></div>
<div class="a m hx" style="left:279px;top:635px;color:#fff">2b</div>
<div class="a m hx" style="left:649px;top:635px;color:#fff">+</div>
<div class="a m hx" style="left:319px;top:635px;color:#fff">29</div>
<div class="a m hx" style="left:669px;top:635px;color:#fff">)</div>
<div class="a m hx" style="left:349px;top:635px;color:#fff">00</div>
<div class="a" style="left:683px;top:643px;width:2.6px;height:2.6px;border-radius:50%;background:#e8f2fb"></div>
<div class="a m hx" style="left:379px;top:635px;color:#fff">ab</div>
<div class="a" style="left:693px;top:643px;width:2.6px;height:2.6px;border-radius:50%;background:#e8f2fb"></div>
<div class="a m hx" style="left:409px;top:635px;color:#fff">df</div>
<div class="a" style="left:703px;top:643px;width:2.6px;height:2.6px;border-radius:50%;background:#e8f2fb"></div>
<div class="a m hx" style="left:439px;top:635px;color:#fff">f4</div>
<div class="a" style="left:713px;top:643px;width:2.6px;height:2.6px;border-radius:50%;background:#e8f2fb"></div>
<div class="a m hx" style="left:469px;top:635px;color:#fff">11</div>
<div class="a" style="left:723px;top:643px;width:2.6px;height:2.6px;border-radius:50%;background:#e8f2fb"></div>
<div class="a m hx" style="left:499px;top:635px;color:#fff">09</div>
<div class="a" style="left:733px;top:643px;width:2.6px;height:2.6px;border-radius:50%;background:#e8f2fb"></div>
<div class="a m hx" style="left:529px;top:635px;color:#fff">9b</div>
<div class="a" style="left:743px;top:643px;width:2.6px;height:2.6px;border-radius:50%;background:#e8f2fb"></div>
<div class="a m hx" style="left:9px;top:657px;color:#4a4a4a">0050</div>
<div class="a" style="left:69px;top:655px;width:480px;height:22px;background:#0078d7"></div>
<div class="a" style="left:579px;top:655px;width:170px;height:22px;background:#0078d7"></div>
<div class="a m hx" style="left:69px;top:657px;color:#fff">a2</div>
<div class="a" style="left:583px;top:665px;width:2.6px;height:2.6px;border-radius:50%;background:#e8f2fb"></div>
<div class="a m hx" style="left:99px;top:657px;color:#fff">f1</div>
<div class="a" style="left:593px;top:665px;width:2.6px;height:2.6px;border-radius:50%;background:#e8f2fb"></div>
<div class="a m hx" style="left:129px;top:657px;color:#fff">69</div>
<div class="a m hx" style="left:599px;top:657px;color:#fff">i</div>
<div class="a m hx" style="left:159px;top:657px;color:#fff">58</div>
<div class="a m hx" style="left:609px;top:657px;color:#fff">X</div>
<div class="a m hx" style="left:189px;top:657px;color:#fff">1e</div>
<div class="a" style="left:623px;top:665px;width:2.6px;height:2.6px;border-radius:50%;background:#e8f2fb"></div>
<div class="a m hx" style="left:219px;top:657px;color:#fff">69</div>
<div class="a m hx" style="left:629px;top:657px;color:#fff">i</div>
<div class="a m hx" style="left:249px;top:657px;color:#fff">81</div>
<div class="a" style="left:643px;top:665px;width:2.6px;height:2.6px;border-radius:50%;background:#e8f2fb"></div>
<div class="a m hx" style="left:279px;top:657px;color:#fff">11</div>
<div class="a" style="left:653px;top:665px;width:2.6px;height:2.6px;border-radius:50%;background:#e8f2fb"></div>
<div class="a m hx" style="left:319px;top:657px;color:#fff">f3</div>
<div class="a" style="left:673px;top:665px;width:2.6px;height:2.6px;border-radius:50%;background:#e8f2fb"></div>
<div class="a m hx" style="left:349px;top:657px;color:#fff">57</div>
<div class="a m hx" style="left:679px;top:657px;color:#fff">W</div>
<div class="a m hx" style="left:379px;top:657px;color:#fff">f0</div>
<div class="a" style="left:693px;top:665px;width:2.6px;height:2.6px;border-radius:50%;background:#e8f2fb"></div>
<div class="a m hx" style="left:409px;top:657px;color:#fff">80</div>
<div class="a" style="left:703px;top:665px;width:2.6px;height:2.6px;border-radius:50%;background:#e8f2fb"></div>
<div class="a m hx" style="left:439px;top:657px;color:#fff">5b</div>
<div class="a m hx" style="left:709px;top:657px;color:#fff">[</div>
<div class="a m hx" style="left:469px;top:657px;color:#fff">d0</div>
<div class="a" style="left:723px;top:665px;width:2.6px;height:2.6px;border-radius:50%;background:#e8f2fb"></div>
<div class="a m hx" style="left:499px;top:657px;color:#fff">20</div>
<div class="a m hx" style="left:729px;top:657px;color:#fff"> </div>
<div class="a m hx" style="left:529px;top:657px;color:#fff">ab</div>
<div class="a" style="left:743px;top:665px;width:2.6px;height:2.6px;border-radius:50%;background:#e8f2fb"></div>
<div class="a m hx" style="left:9px;top:679px;color:#4a4a4a">0060</div>
<div class="a" style="left:69px;top:677px;width:480px;height:22px;background:#0078d7"></div>
<div class="a" style="left:579px;top:677px;width:170px;height:22px;background:#0078d7"></div>
<div class="a m hx" style="left:69px;top:679px;color:#fff">46</div>
<div class="a m hx" style="left:579px;top:679px;color:#fff">F</div>
<div class="a m hx" style="left:99px;top:679px;color:#fff">d4</div>
<div class="a" style="left:593px;top:687px;width:2.6px;height:2.6px;border-radius:50%;background:#e8f2fb"></div>
<div class="a m hx" style="left:129px;top:679px;color:#fff">bd</div>
<div class="a" style="left:603px;top:687px;width:2.6px;height:2.6px;border-radius:50%;background:#e8f2fb"></div>
<div class="a m hx" style="left:159px;top:679px;color:#fff">9c</div>
<div class="a" style="left:613px;top:687px;width:2.6px;height:2.6px;border-radius:50%;background:#e8f2fb"></div>
<div class="a m hx" style="left:189px;top:679px;color:#fff">7a</div>
<div class="a m hx" style="left:619px;top:679px;color:#fff">z</div>
<div class="a m hx" style="left:219px;top:679px;color:#fff">1a</div>
<div class="a" style="left:633px;top:687px;width:2.6px;height:2.6px;border-radius:50%;background:#e8f2fb"></div>
<div class="a m hx" style="left:249px;top:679px;color:#fff">09</div>
<div class="a" style="left:643px;top:687px;width:2.6px;height:2.6px;border-radius:50%;background:#e8f2fb"></div>
<div class="a m hx" style="left:279px;top:679px;color:#fff">00</div>
<div class="a" style="left:653px;top:687px;width:2.6px;height:2.6px;border-radius:50%;background:#e8f2fb"></div>
<div class="a m hx" style="left:319px;top:679px;color:#fff">ce</div>
<div class="a" style="left:673px;top:687px;width:2.6px;height:2.6px;border-radius:50%;background:#e8f2fb"></div>
<div class="a m hx" style="left:349px;top:679px;color:#fff">5d</div>
<div class="a m hx" style="left:679px;top:679px;color:#fff">]</div>
<div class="a m hx" style="left:379px;top:679px;color:#fff">6e</div>
<div class="a m hx" style="left:689px;top:679px;color:#fff">n</div>
<div class="a m hx" style="left:409px;top:679px;color:#fff">66</div>
<div class="a m hx" style="left:699px;top:679px;color:#fff">f</div>
<div class="a m hx" style="left:439px;top:679px;color:#fff">45</div>
<div class="a m hx" style="left:709px;top:679px;color:#fff">E</div>
<div class="a m hx" style="left:469px;top:679px;color:#fff">38</div>
<div class="a m hx" style="left:719px;top:679px;color:#fff">8</div>
<div class="a m hx" style="left:499px;top:679px;color:#fff">14</div>
<div class="a" style="left:733px;top:687px;width:2.6px;height:2.6px;border-radius:50%;background:#e8f2fb"></div>
<div class="a m hx" style="left:529px;top:679px;color:#fff">bb</div>
<div class="a" style="left:743px;top:687px;width:2.6px;height:2.6px;border-radius:50%;background:#e8f2fb"></div>
<div class="a m hx" style="left:9px;top:701px;color:#4a4a4a">0070</div>
<div class="a" style="left:69px;top:699px;width:140px;height:22px;background:#0078d7"></div>
<div class="a" style="left:579px;top:699px;width:50px;height:22px;background:#0078d7"></div>
<div class="a m hx" style="left:69px;top:701px;color:#fff">8d</div>
<div class="a" style="left:583px;top:709px;width:2.6px;height:2.6px;border-radius:50%;background:#e8f2fb"></div>
<div class="a m hx" style="left:99px;top:701px;color:#fff">04</div>
<div class="a" style="left:593px;top:709px;width:2.6px;height:2.6px;border-radius:50%;background:#e8f2fb"></div>
<div class="a m hx" style="left:129px;top:701px;color:#fff">03</div>
<div class="a" style="left:603px;top:709px;width:2.6px;height:2.6px;border-radius:50%;background:#e8f2fb"></div>
<div class="a m hx" style="left:159px;top:701px;color:#fff">00</div>
<div class="a" style="left:613px;top:709px;width:2.6px;height:2.6px;border-radius:50%;background:#e8f2fb"></div>
<div class="a m hx" style="left:189px;top:701px;color:#fff">00</div>
<div class="a" style="left:623px;top:709px;width:2.6px;height:2.6px;border-radius:50%;background:#e8f2fb"></div>
<div class="a" style="left:0;top:781px;width:1495px;height:25px;background:#f0f0f0"></div>
<div class="a" style="left:0;top:806px;width:1495px;height:2px;background:linear-gradient(90deg,#0e7cb8,#0a3a80 60%,#0a2a6a)"></div>
<svg class="a" style="left:7px;top:785px" width="16" height="16"><circle cx="8" cy="8" r="6.8" fill="#ea6a6a" stroke="#8a3a30" stroke-width="0.9"/><ellipse cx="7" cy="5.5" rx="3.5" ry="2" fill="#f09a9a" opacity="0.7"/></svg>
<svg class="a" style="left:32px;top:786px" width="15" height="15"><rect x="0.5" y="0.5" width="11" height="13" fill="#f4f4f4" stroke="#c8c8c8"/><rect x="1" y="1" width="8" height="3" fill="#3a8ee0"/><path d="M4 11 L12.5 2 L14 3.5 L5.5 12 L3.5 12.5 Z" fill="#3a3a3a"/></svg>
<div class="a" style="left:63px;top:785px;font-size:15px;line-height:18px;white-space:nowrap;color:#000;"><span style="display:inline-block;width:16px;text-align:center;">无</span><span style="display:inline-block;width:16px;text-align:center;">分</span><span style="display:inline-block;width:16px;text-align:center;">组</span><span style="display:inline-block;width:16px;text-align:center;">的</span><span style="display:inline-block;width:16px;text-align:center;">“</span><span style="display:inline-block;width:16px;text-align:center;">信</span><span style="display:inline-block;width:16px;text-align:center;">息</span><span style="display:inline-block;width:16px;text-align:center;">”</span><span style="display:inline-block;width:16px;text-align:center;">列</span><span style="display:inline-block;width:16px;text-align:center;">包</span><span style="display:inline-block;width:16px;text-align:center;">含</span><span style="display:inline-block;width:16px;text-align:center;">该</span><span style="display:inline-block;width:16px;text-align:center;">字</span><span style="display:inline-block;width:16px;text-align:center;">符</span><span style="display:inline-block;width:16px;text-align:center;">串</span><span style="display:inline-block;width:16px;text-align:center;">。</span></div>
<div class="a" style="left:903px;top:784px;width:1px;height:19px;background:#c8c8c8"></div>
<div class="a" style="left:907px;top:784px;width:1px;height:19px;background:#c8c8c8"></div>
<div class="a" style="left:1352px;top:784px;width:1px;height:19px;background:#c8c8c8"></div>
<div class="a" style="left:1356px;top:784px;width:1px;height:19px;background:#c8c8c8"></div>
<div class="a" style="left:918px;top:785px;font-size:15px;line-height:18px;white-space:nowrap;color:#000;"><span style="display:inline-block;width:16px;text-align:center;">分</span><span style="display:inline-block;width:16px;text-align:center;">组</span><span style="display:inline-block;width:16px;text-align:left;padding-left:1px;font-family:'Liberation Mono',monospace;font-size:14px;position:relative;top:1px">:</span></div>
<div class="a" style="left:963px;top:785px;font-size:15px;line-height:18px;white-space:nowrap;color:#000;"><span style="display:inline-block;width:8px;text-align:center;font-family:'Liberation Mono',monospace;font-size:14px;position:relative;top:1px">7</span><span style="display:inline-block;width:8px;text-align:center;font-family:'Liberation Mono',monospace;font-size:14px;position:relative;top:1px">2</span><span style="display:inline-block;width:8px;text-align:center;font-family:'Liberation Mono',monospace;font-size:14px;position:relative;top:1px">1</span><span style="display:inline-block;width:8px;text-align:center;font-family:'Liberation Mono',monospace;font-size:14px;position:relative;top:1px">0</span></div>
<div class="a" style="left:1006px;top:785px;font-size:15px;line-height:18px;white-space:nowrap;color:#000;"><span style="display:inline-block;width:8px;text-align:center;font-family:'Liberation Mono',monospace;font-size:14px;position:relative;top:1px">·</span></div>
<div class="a" style="left:1026px;top:785px;font-size:15px;line-height:18px;white-space:nowrap;color:#000;"><span style="display:inline-block;width:16px;text-align:center;">已</span><span style="display:inline-block;width:16px;text-align:center;">显</span><span style="display:inline-block;width:16px;text-align:center;">示</span><span style="display:inline-block;width:16px;text-align:left;padding-left:1px;font-family:'Liberation Mono',monospace;font-size:14px;position:relative;top:1px">:</span></div>
<div class="a" style="left:1088px;top:785px;font-size:15px;line-height:18px;white-space:nowrap;color:#000;"><span style="display:inline-block;width:8px;text-align:center;font-family:'Liberation Mono',monospace;font-size:14px;position:relative;top:1px">7</span><span style="display:inline-block;width:8px;text-align:center;font-family:'Liberation Mono',monospace;font-size:14px;position:relative;top:1px">2</span><span style="display:inline-block;width:8px;text-align:center;font-family:'Liberation Mono',monospace;font-size:14px;position:relative;top:1px">1</span><span style="display:inline-block;width:8px;text-align:center;font-family:'Liberation Mono',monospace;font-size:14px;position:relative;top:1px">0</span></div>
<div class="a" style="left:1128px;top:785px;font-size:15px;line-height:18px;white-space:nowrap;color:#000;"><span style="display:inline-block;width:8px;text-align:center;font-family:'Liberation Mono',monospace;font-size:14px;position:relative;top:1px">(</span><span style="display:inline-block;width:8px;text-align:center;font-family:'Liberation Mono',monospace;font-size:14px;position:relative;top:1px">1</span><span style="display:inline-block;width:8px;text-align:center;font-family:'Liberation Mono',monospace;font-size:14px;position:relative;top:1px">0</span><span style="display:inline-block;width:8px;text-align:center;font-family:'Liberation Mono',monospace;font-size:14px;position:relative;top:1px">0</span><span style="display:inline-block;width:8px;text-align:center;font-family:'Liberation Mono',monospace;font-size:14px;position:relative;top:1px">.</span><span style="display:inline-block;width:8px;text-align:center;font-family:'Liberation Mono',monospace;font-size:14px;position:relative;top:1px">0</span><span style="display:inline-block;width:8px;text-align:center;font-family:'Liberation Mono',monospace;font-size:14px;position:relative;top:1px">%</span><span style="display:inline-block;width:8px;text-align:center;font-family:'Liberation Mono',monospace;font-size:14px;position:relative;top:1px">)</span></div>
<div class="a" style="left:1204px;top:785px;font-size:15px;line-height:18px;white-space:nowrap;color:#000;"><span style="display:inline-block;width:8px;text-align:center;font-family:'Liberation Mono',monospace;font-size:14px;position:relative;top:1px">·</span></div>
<div class="a" style="left:1223px;top:785px;font-size:15px;line-height:18px;white-space:nowrap;color:#000;"><span style="display:inline-block;width:16px;text-align:center;">已</span><span style="display:inline-block;width:16px;text-align:center;">丢</span><span style="display:inline-block;width:16px;text-align:center;">弃</span><span style="display:inline-block;width:16px;text-align:left;padding-left:1px;font-family:'Liberation Mono',monospace;font-size:14px;position:relative;top:1px">:</span></div>
<div class="a" style="left:1284px;top:785px;font-size:15px;line-height:18px;white-space:nowrap;color:#000;"><span style="display:inline-block;width:8px;text-align:center;font-family:'Liberation Mono',monospace;font-size:14px;position:relative;top:1px">0</span></div>
<div class="a" style="left:1301px;top:785px;font-size:15px;line-height:18px;white-space:nowrap;color:#000;"><span style="display:inline-block;width:8px;text-align:center;font-family:'Liberation Mono',monospace;font-size:14px;position:relative;top:1px">(</span><span style="display:inline-block;width:8px;text-align:center;font-family:'Liberation Mono',monospace;font-size:14px;position:relative;top:1px">0</span><span style="display:inline-block;width:8px;text-align:center;font-family:'Liberation Mono',monospace;font-size:14px;position:relative;top:1px">.</span><span style="display:inline-block;width:8px;text-align:center;font-family:'Liberation Mono',monospace;font-size:14px;position:relative;top:1px">0</span><span style="display:inline-block;width:8px;text-align:center;font-family:'Liberation Mono',monospace;font-size:14px;position:relative;top:1px">%</span><span style="display:inline-block;width:8px;text-align:center;font-family:'Liberation Mono',monospace;font-size:14px;position:relative;top:1px">)</span></div>
<div class="a" style="left:1367px;top:785px;font-size:15px;line-height:18px;white-space:nowrap;color:#000;"><span style="display:inline-block;width:16px;text-align:center;">配</span><span style="display:inline-block;width:16px;text-align:center;">置</span><span style="display:inline-block;width:16px;text-align:left;padding-left:1px;font-family:'Liberation Mono',monospace;font-size:14px;position:relative;top:1px">:</span></div>
<div class="a" style="left:1413px;top:785px;font-size:15px;line-height:18px;white-space:nowrap;color:#000;"><span style="display:inline-block;width:8px;text-align:center;font-family:'Liberation Mono',monospace;font-size:14px;position:relative;top:1px">D</span><span style="display:inline-block;width:8px;text-align:center;font-family:'Liberation Mono',monospace;font-size:14px;position:relative;top:1px">e</span><span style="display:inline-block;width:8px;text-align:center;font-family:'Liberation Mono',monospace;font-size:14px;position:relative;top:1px">f</span><span style="display:inline-block;width:8px;text-align:center;font-family:'Liberation Mono',monospace;font-size:14px;position:relative;top:1px">a</span><span style="display:inline-block;width:8px;text-align:center;font-family:'Liberation Mono',monospace;font-size:14px;position:relative;top:1px">u</span><span style="display:inline-block;width:8px;text-align:center;font-family:'Liberation Mono',monospace;font-size:14px;position:relative;top:1px">l</span><span style="display:inline-block;width:8px;text-align:center;font-family:'Liberation Mono',monospace;font-size:14px;position:relative;top:1px">t</span></div>
<svg class="a" style="left:1482px;top:792px" width="12" height="12"><g fill="#c0c0c0"><rect x="8" y="0" width="3" height="3"/><rect x="4" y="4" width="3" height="3"/><rect x="8" y="4" width="3" height="3"/><rect x="0" y="8" width="3" height="3"/><rect x="4" y="8" width="3" height="3"/><rect x="8" y="8" width="3" height="3"/></g></svg>
</body></html>
